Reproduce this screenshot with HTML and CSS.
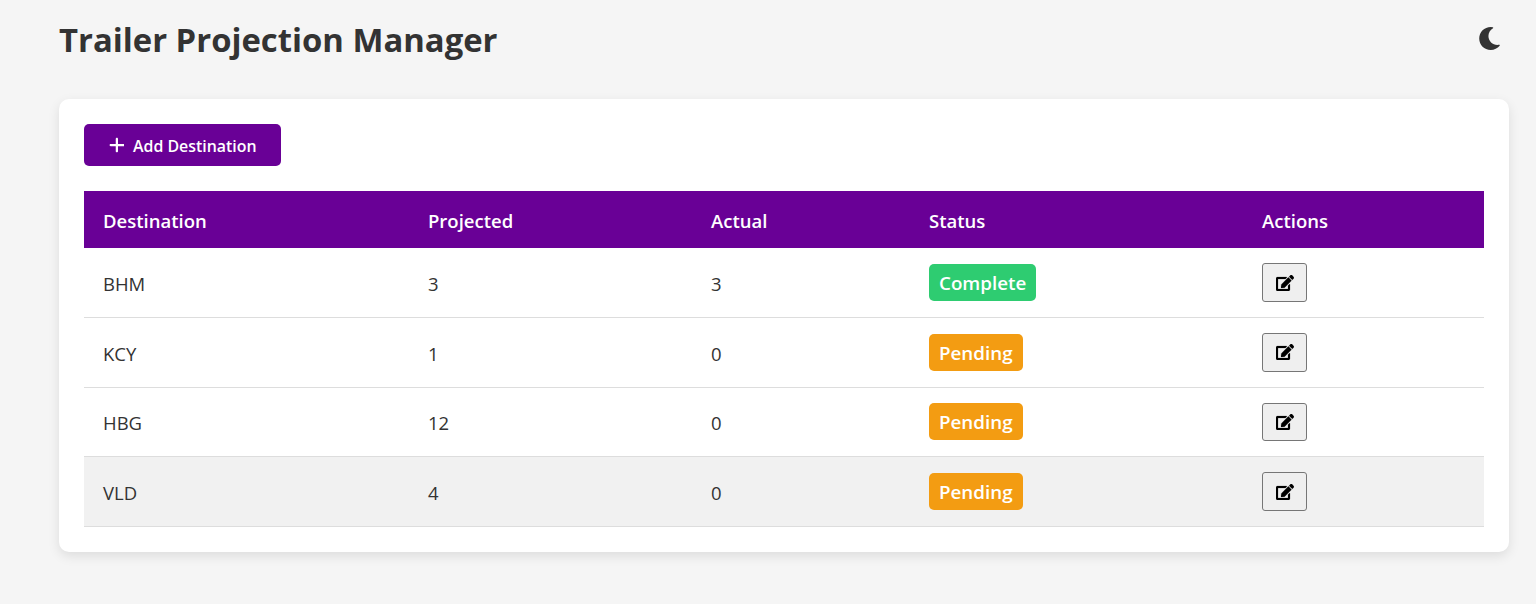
FILE: index.html
```html
<!DOCTYPE html>
<html lang="en">
<head>
<meta charset="utf-8">
<title>Trailer Projection Manager</title>
<link rel="stylesheet" href="styles.css">
</head>
<body>
<div class="page">
  <header class="top">
    <h1 class="title">Trailer Projection Manager</h1>
    <button class="theme" type="button" aria-label="Toggle theme">
      <svg class="moon" viewBox="0 0 512 512"><path d="M283.211 512c78.962 0 151.079-35.925 198.857-94.792 7.068-8.708-.639-21.43-11.562-19.35-124.203 23.654-238.262-71.576-238.262-196.954 0-72.222 38.662-138.635 101.498-174.394 9.686-5.512 7.25-20.197-3.756-22.23A258.156 258.156 0 0 0 283.211 0c-141.309 0-256 114.511-256 256 0 141.309 114.511 256 256 256z"/></svg>
    </button>
  </header>
  <main class="card">
    <button class="add" type="button">
      <svg class="plus" viewBox="0 0 448 512"><path d="M256 80c0-17.7-14.3-32-32-32s-32 14.3-32 32V224H48c-17.7 0-32 14.3-32 32s14.3 32 32 32H192V432c0 17.7 14.3 32 32 32s32-14.3 32-32V288H432c17.7 0 32-14.3 32-32s-14.3-32-32-32H256V80z"/></svg>
      <span class="add-label">Add Destination</span>
    </button>
    <table class="grid">
      <colgroup>
        <col class="c1"><col class="c2"><col class="c3"><col class="c4"><col class="c5">
      </colgroup>
      <thead>
        <tr><th>Destination</th><th>Projected</th><th>Actual</th><th>Status</th><th>Actions</th></tr>
      </thead>
      <tbody>
        <tr><td>BHM</td><td>3</td><td>3</td><td><span class="badge complete">Complete</span></td><td><button class="edit" type="button" aria-label="Edit"><svg class="pen" viewBox="0 0 576 512"><path d="M402.6 83.2l90.2 90.2c3.8 3.8 3.8 10 0 13.8L274.4 405.6l-92.8 10.3c-12.4 1.4-22.9-9.1-21.5-21.5l10.3-92.8L388.8 83.2c3.8-3.8 10-3.8 13.8 0zm162-22.9l-48.8-48.8c-15.2-15.2-39.9-15.2-55.2 0l-35.4 35.4c-3.8 3.8-3.8 10 0 13.8l90.2 90.2c3.8 3.8 10 3.8 13.8 0l35.4-35.4c15.2-15.3 15.2-40 0-55.2zM384 346.2V448H64V128h229.8c3.2 0 6.2-1.3 8.5-3.5l40-40c7.6-7.6 2.2-20.5-8.5-20.5H48C21.5 64 0 85.5 0 112v352c0 26.5 21.5 48 48 48h352c26.5 0 48-21.5 48-48V306.2c0-10.7-12.9-16-20.5-8.5l-40 40c-2.2 2.3-3.5 5.3-3.5 8.5z"/></svg></button></td></tr>
        <tr><td>KCY</td><td>1</td><td>0</td><td><span class="badge pending">Pending</span></td><td><button class="edit" type="button" aria-label="Edit"><svg class="pen" viewBox="0 0 576 512"><path d="M402.6 83.2l90.2 90.2c3.8 3.8 3.8 10 0 13.8L274.4 405.6l-92.8 10.3c-12.4 1.4-22.9-9.1-21.5-21.5l10.3-92.8L388.8 83.2c3.8-3.8 10-3.8 13.8 0zm162-22.9l-48.8-48.8c-15.2-15.2-39.9-15.2-55.2 0l-35.4 35.4c-3.8 3.8-3.8 10 0 13.8l90.2 90.2c3.8 3.8 10 3.8 13.8 0l35.4-35.4c15.2-15.3 15.2-40 0-55.2zM384 346.2V448H64V128h229.8c3.2 0 6.2-1.3 8.5-3.5l40-40c7.6-7.6 2.2-20.5-8.5-20.5H48C21.5 64 0 85.5 0 112v352c0 26.5 21.5 48 48 48h352c26.5 0 48-21.5 48-48V306.2c0-10.7-12.9-16-20.5-8.5l-40 40c-2.2 2.3-3.5 5.3-3.5 8.5z"/></svg></button></td></tr>
        <tr><td>HBG</td><td>12</td><td>0</td><td><span class="badge pending">Pending</span></td><td><button class="edit" type="button" aria-label="Edit"><svg class="pen" viewBox="0 0 576 512"><path d="M402.6 83.2l90.2 90.2c3.8 3.8 3.8 10 0 13.8L274.4 405.6l-92.8 10.3c-12.4 1.4-22.9-9.1-21.5-21.5l10.3-92.8L388.8 83.2c3.8-3.8 10-3.8 13.8 0zm162-22.9l-48.8-48.8c-15.2-15.2-39.9-15.2-55.2 0l-35.4 35.4c-3.8 3.8-3.8 10 0 13.8l90.2 90.2c3.8 3.8 10 3.8 13.8 0l35.4-35.4c15.2-15.3 15.2-40 0-55.2zM384 346.2V448H64V128h229.8c3.2 0 6.2-1.3 8.5-3.5l40-40c7.6-7.6 2.2-20.5-8.5-20.5H48C21.5 64 0 85.5 0 112v352c0 26.5 21.5 48 48 48h352c26.5 0 48-21.5 48-48V306.2c0-10.7-12.9-16-20.5-8.5l-40 40c-2.2 2.3-3.5 5.3-3.5 8.5z"/></svg></button></td></tr>
        <tr class="hover"><td>VLD</td><td>4</td><td>0</td><td><span class="badge pending">Pending</span></td><td><button class="edit" type="button" aria-label="Edit"><svg class="pen" viewBox="0 0 576 512"><path d="M402.6 83.2l90.2 90.2c3.8 3.8 3.8 10 0 13.8L274.4 405.6l-92.8 10.3c-12.4 1.4-22.9-9.1-21.5-21.5l10.3-92.8L388.8 83.2c3.8-3.8 10-3.8 13.8 0zm162-22.9l-48.8-48.8c-15.2-15.2-39.9-15.2-55.2 0l-35.4 35.4c-3.8 3.8-3.8 10 0 13.8l90.2 90.2c3.8 3.8 10 3.8 13.8 0l35.4-35.4c15.2-15.3 15.2-40 0-55.2zM384 346.2V448H64V128h229.8c3.2 0 6.2-1.3 8.5-3.5l40-40c7.6-7.6 2.2-20.5-8.5-20.5H48C21.5 64 0 85.5 0 112v352c0 26.5 21.5 48 48 48h352c26.5 0 48-21.5 48-48V306.2c0-10.7-12.9-16-20.5-8.5l-40 40c-2.2 2.3-3.5 5.3-3.5 8.5z"/></svg></button></td></tr>
      </tbody>
    </table>
  </main>
</div>
</body>
</html>
```
FILE: styles.css
```css
* { box-sizing: border-box; }
html, body { margin: 0; height: 100%; }
body {
  background: #f5f5f5;
  color: #333;
  font-family: "Open Sans", "Noto Sans", sans-serif;
  overflow: hidden;
}
.page { width: 1450px; margin-left: 59px; }
.top {
  display: flex;
  justify-content: space-between;
  align-items: center;
  height: 99px;
  padding-bottom: 19px;
}
.title {
  margin: 0;
  font-size: 32.85px;
  font-weight: 700;
  line-height: 80px;
  color: #333;
}
.theme {
  display: flex;
  align-items: center;
  justify-content: center;
  padding: 0;
  margin: 0 8.5px 3px 0;
  border: 0;
  background: none;
  width: 23px;
  height: 23px;
}
.moon { width: 23px; height: 23px; flex: none; fill: #333; }
.card {
  background: #fff;
  border-radius: 10px;
  padding: 25px;
  height: 453px;
  box-shadow: 0 4px 12px rgba(0, 0, 0, 0.1);
}
.add {
  display: flex;
  align-items: center;
  gap: 8.75px;
  width: 197px;
  height: 42px;
  padding: 0 0 0 24.5px;
  border: 0;
  border-radius: 5px;
  background: #690096;
  color: #fff;
  font-family: inherit;
  font-size: 15.9px;
  font-weight: 600;
}
.add-label { padding-top: 2px; }
.plus { width: 15.75px; height: 18px; margin-top: -1px; flex: none; fill: #fff; }
.grid {
  width: 1400px;
  margin-top: 25px;
  border-collapse: collapse;
  table-layout: fixed;
}
.c1 { width: 325px; }
.c2 { width: 283px; }
.c3 { width: 218px; }
.c4 { width: 333px; }
.c5 { width: 241px; }
th {
  height: 57px;
  padding: 2px 19px 0;
  background: #690096;
  color: #fff;
  text-align: left;
  font-size: 18.5px;
  font-weight: 600;
}
td {
  height: 69.6px;
  padding: 0 19px;
  border-bottom: 1px solid #ddd;
  font-size: 18.5px;
}
td:nth-child(-n+3) { padding-top: 2px; }
.hover td { background: #f1f1f1; }
.badge {
  display: inline-block;
  padding: 0 10px;
  height: 37px;
  line-height: 39px;
  border-radius: 5px;
  color: #fff;
  font-size: 18.8px;
  font-weight: 600;
}
.complete { background: #2ecc71; }
.pending { background: #f39c12; }
.edit {
  display: flex;
  align-items: center;
  justify-content: center;
  width: 45px;
  height: 38.4px;
  padding: 0;
  background: #efefef;
  border: 1px solid #767676;
  border-radius: 3px;
}
.pen { width: 18px; height: 16px; flex: none; fill: #000; stroke: #000; stroke-width: 6; }
```
